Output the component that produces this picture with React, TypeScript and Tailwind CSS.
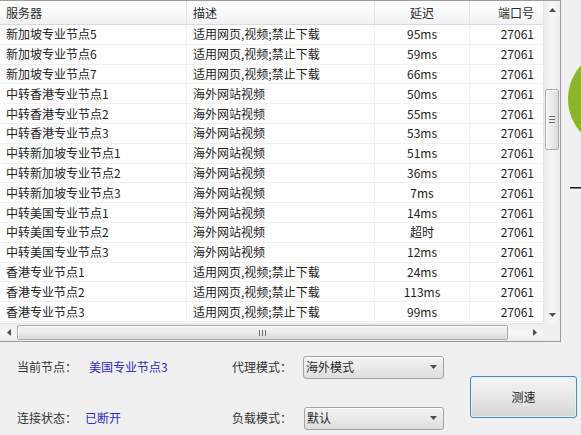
import React from "react";

interface Node {
  name: string;
  desc: string;
  delay: string;
  port: string;
}

const WEB = "适用网页,视频;禁止下载";
const VIDEO = "海外网站视频";

const nodes: Node[] = [
  { name: "新加坡专业节点5", desc: WEB, delay: "95ms", port: "27061" },
  { name: "新加坡专业节点6", desc: WEB, delay: "59ms", port: "27061" },
  { name: "新加坡专业节点7", desc: WEB, delay: "66ms", port: "27061" },
  { name: "中转香港专业节点1", desc: VIDEO, delay: "50ms", port: "27061" },
  { name: "中转香港专业节点2", desc: VIDEO, delay: "55ms", port: "27061" },
  { name: "中转香港专业节点3", desc: VIDEO, delay: "53ms", port: "27061" },
  { name: "中转新加坡专业节点1", desc: VIDEO, delay: "51ms", port: "27061" },
  { name: "中转新加坡专业节点2", desc: VIDEO, delay: "36ms", port: "27061" },
  { name: "中转新加坡专业节点3", desc: VIDEO, delay: "7ms", port: "27061" },
  { name: "中转美国专业节点1", desc: VIDEO, delay: "14ms", port: "27061" },
  { name: "中转美国专业节点2", desc: VIDEO, delay: "超时", port: "27061" },
  { name: "中转美国专业节点3", desc: VIDEO, delay: "12ms", port: "27061" },
  { name: "香港专业节点1", desc: WEB, delay: "24ms", port: "27061" },
  { name: "香港专业节点2", desc: WEB, delay: "113ms", port: "27061" },
  { name: "香港专业节点3", desc: WEB, delay: "99ms", port: "27061" },
];

const cols = "grid grid-cols-[187px_188px_95px_73px]";

function Arrow({ dir }: { dir: "up" | "down" | "left" | "right" }) {
  const pts = {
    up: "0,4 3.5,0 7,4",
    down: "0,0 3.5,4 7,0",
    left: "4,0 0,3.5 4,7",
    right: "0,0 4,3.5 0,7",
  }[dir];
  const vertical = dir === "up" || dir === "down";
  return (
    <svg width={vertical ? 7 : 4} height={vertical ? 4 : 7} viewBox={vertical ? "0 0 7 4" : "0 0 4 7"}>
      <polygon points={pts} fill="#4d4d4d" />
    </svg>
  );
}

function Select({ value, width }: { value: string; width: string }) {
  return (
    <div
      className={`${width} h-[23px] flex items-center justify-between pl-[2px] pr-[6px] border border-[#a3a3a3] rounded-[3px] bg-gradient-to-b from-[#f4f4f4] to-[#dedede] text-[#2a2a2a] shadow-[inset_0_1px_0_#ffffff]`}
    >
      <span>{value}</span>
      <Arrow dir="down" />
    </div>
  );
}

export default function App() {
  return (
    <div
      className="w-[581px] h-[435px] bg-[#f0f0f0] overflow-hidden text-[12px] leading-none"
      style={{ fontFamily: '"Microsoft YaHei", "Noto Sans CJK SC", "Noto Sans", sans-serif' }}
    >
      <div className="flex h-[342px]">
        {/* node list */}
        <div className="w-[561px] flex flex-col bg-white border-t border-r border-b border-[#9c9c9c]">
          <div className="flex flex-1 min-h-0">
            <div className="w-[543px] overflow-hidden">
              <div className={`${cols} h-[24px] bg-gradient-to-b from-white to-[#f1f2f4] border-b border-[#d9dbde] text-[#2a2a2a]`}>
                <div className="flex items-center pl-[6px] border-r border-[#e3e4e6]">服务器</div>
                <div className="flex items-center pl-[6px] border-r border-[#e3e4e6]">描述</div>
                <div className="flex items-center justify-center border-r border-[#e3e4e6]">延迟</div>
                <div className="flex items-center justify-end pr-[9px]">端口号</div>
              </div>
              {nodes.map((n) => (
                <div key={n.name} className={`${cols} h-[19.8px] border-b border-[#f0f0f0] text-[#222]`}>
                  <div className="flex items-center pl-[6px] border-r border-[#f0f0f0]">{n.name}</div>
                  <div className="flex items-center pl-[6px] border-r border-[#f0f0f0]">{n.desc}</div>
                  <div className="flex items-center justify-center border-r border-[#f0f0f0]">{n.delay}</div>
                  <div className="flex items-center justify-end pr-[9px]">{n.port}</div>
                </div>
              ))}
            </div>
            {/* vertical scrollbar */}
            <div className="w-[17px] flex flex-col bg-gradient-to-r from-[#ececec] via-[#f7f7f7] to-[#ececec] border-l border-[#e6e6e6]">
              <div className="h-[17px] flex items-center justify-center">
                <Arrow dir="up" />
              </div>
              <div className="h-[71px]" />
              <div className="h-[61px] mx-[1px] flex items-center justify-center rounded-[2px] border border-[#acacac] bg-gradient-to-r from-[#f4f4f4] via-[#ebebeb] to-[#dadada] shadow-[inset_1px_1px_0_#ffffff]">
                <div className="flex flex-col gap-[2px]">
                  <div className="w-[6px] h-px bg-[#6e6e6e]" />
                  <div className="w-[6px] h-px bg-[#6e6e6e]" />
                  <div className="w-[6px] h-px bg-[#6e6e6e]" />
                </div>
              </div>
              <div className="flex-1" />
              <div className="h-[17px] flex items-center justify-center">
                <Arrow dir="down" />
              </div>
            </div>
          </div>
          {/* horizontal scrollbar */}
          <div className="h-[18px] flex">
            <div className="w-[543px] flex items-stretch bg-gradient-to-b from-[#ececec] via-[#f7f7f7] to-[#ececec] border-t border-[#e6e6e6]">
              <div className="w-[17px] flex items-center justify-center">
                <Arrow dir="left" />
              </div>
              <div className="w-[491px] my-[1px] flex items-center justify-center rounded-[2px] border border-[#acacac] bg-gradient-to-b from-[#f4f4f4] via-[#ebebeb] to-[#dadada] shadow-[inset_1px_1px_0_#ffffff]">
                <div className="flex gap-[2px]">
                  <div className="w-px h-[6px] bg-[#6e6e6e]" />
                  <div className="w-px h-[6px] bg-[#6e6e6e]" />
                  <div className="w-px h-[6px] bg-[#6e6e6e]" />
                </div>
              </div>
              <div className="flex-1" />
              <div className="w-[17px] flex items-center justify-center">
                <Arrow dir="right" />
              </div>
            </div>
            <div className="flex-1 bg-[#f0f0f0]" />
          </div>
        </div>
        {/* decoration on the right edge */}
        <div className="flex-1">
          <svg width="20" height="342" viewBox="0 0 20 342">
            <circle cx="57" cy="99" r="50" fill="#8db52a" />
            <rect x="9" y="187" width="11" height="1.5" fill="#1a1a1a" />
          </svg>
        </div>
      </div>

      {/* status area */}
      <div className="flex h-[93px] text-[#333]">
        <div className="w-[470px] pt-[13px] flex flex-col gap-[27px]">
          <div className="flex items-center h-[24px] pl-[17px]">
            <span className="w-[72px]">当前节点：</span>
            <span className="w-[143px] text-[#2a2acc]">美国专业节点3</span>
            <span className="w-[71px]">代理模式：</span>
            <Select value="海外模式" width="w-[141px]" />
          </div>
          <div className="flex items-center h-[24px] pl-[17px]">
            <span className="w-[68px]">连接状态：</span>
            <span className="w-[147px] text-[#2a2acc]">已断开</span>
            <span className="w-[72px]">负载模式：</span>
            <Select value="默认" width="w-[140px]" />
          </div>
        </div>
        <div className="pt-[34px]">
          <button className="w-[107px] h-[42px] flex items-center justify-center rounded-[3px] border border-[#4a8ab5] bg-gradient-to-b from-[#f5f5f5] via-[#e8e8e8] to-[#d4d4d4] text-[#222] shadow-[inset_0_0_0_1px_#dff1fb]">
            测速
          </button>
        </div>
      </div>
    </div>
  );
}
